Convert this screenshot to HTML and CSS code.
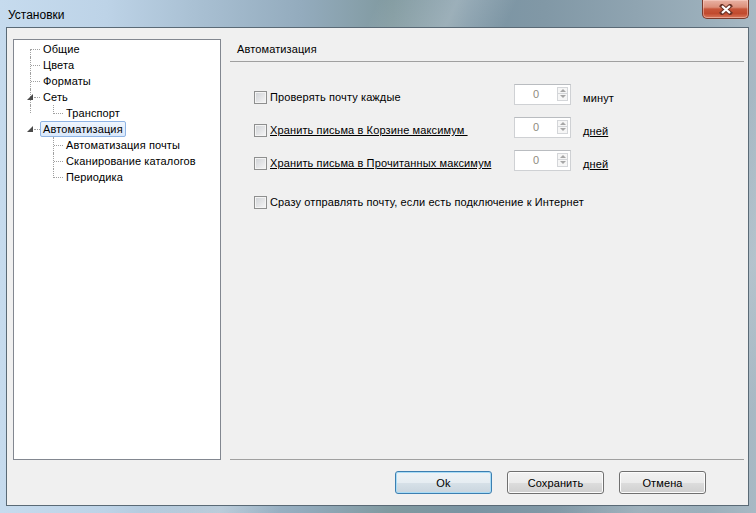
FILE: index.html
```html
<!DOCTYPE html>
<html lang="ru">
<head>
    <meta charset="UTF-8">
    <title>Установки</title>
    <link rel="stylesheet" href="styles.css">
</head>
<body>
<div class="window">
    <div class="titlebar">
        <div class="title">Установки</div>
        <button class="close" type="button">
            <svg width="14" height="11" viewBox="0 0 14 11">
                <path d="M3 2 L11 9 M11 2 L3 9" stroke="#6b3226" stroke-width="4.2" stroke-linecap="square" fill="none"/>
                <path d="M3 2 L11 9 M11 2 L3 9" stroke="#ffffff" stroke-width="2.2" fill="none"/>
            </svg>
        </button>
    </div>

    <div class="client">
        <div class="main">
            <!-- дерево разделов -->
            <div class="tree">
                <div class="node"><span class="cell first"></span><span class="label">Общие</span></div>
                <div class="node"><span class="cell"></span><span class="label">Цвета</span></div>
                <div class="node"><span class="cell"></span><span class="label">Форматы</span></div>
                <div class="node"><span class="cell open"><i class="glyph"></i></span><span class="label">Сеть</span></div>
                <div class="node"><span class="cell pipe short"></span><span class="cell end"></span><span class="label">Транспорт</span></div>
                <div class="node"><span class="cell open last"><i class="glyph"></i></span><span class="label selected">Автоматизация</span></div>
                <div class="node"><span class="cell blank"></span><span class="cell"></span><span class="label">Автоматизация почты</span></div>
                <div class="node"><span class="cell blank"></span><span class="cell"></span><span class="label">Сканирование каталогов</span></div>
                <div class="node"><span class="cell blank"></span><span class="cell end"></span><span class="label">Периодика</span></div>
            </div>

            <!-- страница настроек -->
            <div class="page">
                <div class="page-head">Автоматизация</div>
                <div class="options">
                    <div class="opt">
                        <label class="check"><span class="box"></span><span class="text">Проверять почту каждые</span></label>
                        <div class="spin"><span class="value">0</span><span class="arrows"><span class="up"></span><span class="down"></span></span></div>
                        <span class="unit">минут</span>
                    </div>
                    <div class="opt">
                        <label class="check"><span class="box"></span><span class="text link">Хранить письма в Корзине максимум&nbsp;</span></label>
                        <div class="spin"><span class="value">0</span><span class="arrows"><span class="up"></span><span class="down"></span></span></div>
                        <span class="unit link">дней</span>
                    </div>
                    <div class="opt">
                        <label class="check"><span class="box"></span><span class="text link">Хранить письма в Прочитанных максимум</span></label>
                        <div class="spin"><span class="value">0</span><span class="arrows"><span class="up"></span><span class="down"></span></span></div>
                        <span class="unit link">дней</span>
                    </div>
                    <div class="opt wide">
                        <label class="check"><span class="box"></span><span class="text">Сразу отправлять почту, если есть подключение к Интернет</span></label>
                    </div>
                </div>
            </div>
        </div>

        <div class="buttons">
            <button class="btn default" type="button">Ok</button>
            <button class="btn" type="button">Сохранить</button>
            <button class="btn small" type="button">Отмена</button>
        </div>
    </div>
</div>
</body>
</html>
```

FILE: styles.css
```css
body {
    margin: 0;
    font-family: "Liberation Sans", Arial, sans-serif;
    font-size: 11px;
    letter-spacing: 0.12px;
    color: #000;
}

/* окно с рамкой "стекло" */
.window {
    width: 756px;
    height: 513px;
    box-sizing: border-box;
    padding: 0 7px 7px 6px;
    background:
        linear-gradient(115deg, rgba(255,255,255,0) 38%, rgba(255,255,255,.25) 46%, rgba(255,255,255,0) 52%, rgba(255,255,255,0) 80%, rgba(255,255,255,.15) 88%, rgba(255,255,255,0) 95%),
        linear-gradient(to right, #c6dbee 0%, #bdd3e7 14%, #a9c0d3 26%, #93abbd 40%, #80999f 52%, #7a94a3 62%, #8198a6 72%, #8fa4b1 84%, #9cb0bc 94%, #a8b9c4 100%);
}

.titlebar {
    height: 27px;
    display: flex;
    justify-content: space-between;
    align-items: flex-start;
}

.title {
    padding: 8px 0 0 2px;
    font-size: 12px;
    line-height: 15px;
    letter-spacing: 0;
    color: #000;
}

.close {
    width: 47px;
    height: 19px;
    padding: 0;
    margin: 0;
    display: flex;
    align-items: center;
    justify-content: center;
    border: 1px solid #7a3a2c;
    border-top: none;
    border-radius: 0 0 5px 5px;
    background: linear-gradient(#e9b2a4 0%, #dc8f7a 40%, #c7553a 50%, #c14a2e 75%, #d9785c 100%);
    box-shadow: inset 0 0 0 1px rgba(255,220,210,.45);
}

.client {
    border: 1px solid #5a6a76;
    background-color: #f0f0f0;
    padding: 11px 0 11px 6px;
}

.main {
    display: flex;
    align-items: flex-start;
    gap: 9px;
    padding-right: 4px;
}

/* дерево */
.tree {
    width: 208px;
    height: 421px;
    box-sizing: border-box;
    flex: none;
    border: 1px solid #828790;
    background-color: #fff;
    padding: 1px 0 0 3px;
}

.node {
    display: flex;
    height: 16px;
}

.cell {
    position: relative;
    width: 23px;
    height: 16px;
    flex: none;
}

.cell::before {
    content: '';
    position: absolute;
    left: 13px;
    top: 0;
    bottom: 0;
    border-left: 1px dotted #a0a0a0;
}

.cell::after {
    content: '';
    position: absolute;
    left: 14px;
    right: 0;
    top: 8px;
    border-top: 1px dotted #a0a0a0;
}

.cell.first::before { top: 8px; }
.cell.end::before { bottom: 7px; }
.cell.short::before { bottom: 8px; }
.cell.pipe::after { display: none; }
.cell.blank::before,
.cell.blank::after { display: none; }
.cell.last::before { display: none; }
.cell.open::after { left: 17px; }

.glyph {
    position: absolute;
    left: 10px;
    top: 5px;
    width: 0;
    height: 0;
    border-left: 6px solid transparent;
    border-bottom: 6px solid #4a4a4a;
}

.label {
    height: 16px;
    box-sizing: border-box;
    padding: 0 2px;
    border: 1px solid transparent;
    line-height: 14px;
    white-space: nowrap;
}

.label.selected {
    border-color: #8fb4e4;
    border-radius: 2px;
    background: linear-gradient(#eef5fd, #d9e8fb);
}

/* страница */
.page {
    flex: 1;
    height: 420px;
    border-bottom: 1px solid #a0a0a0;
}

.page-head {
    height: 22px;
    border-bottom: 1px solid #a0a0a0;
    padding-left: 7px;
    line-height: 20px;
}

.options {
    padding: 22px 0 0 24px;
}

.opt {
    display: flex;
    align-items: center;
    height: 21px;
    margin-bottom: 12px;
}

.opt.wide {
    margin-top: 18px;
}

.check {
    width: 260px;
    margin-top: 5px;
    display: flex;
    align-items: center;
    gap: 3px;
    white-space: nowrap;
}

.box {
    width: 13px;
    height: 13px;
    box-sizing: border-box;
    flex: none;
    border: 1px solid #8e8f8f;
    background: linear-gradient(135deg, #cfd2d6 0%, #e4e5e7 55%, #f7f7f7 100%);
    box-shadow: inset 0 0 0 1px #f4f4f4;
}

.link {
    text-decoration: underline;
}

.spin {
    width: 57px;
    height: 21px;
    box-sizing: border-box;
    display: flex;
    align-items: center;
    border: 1px solid #cfd1d4;
    border-top-color: #b9bcc0;
    background-color: #fff;
}

.value {
    flex: 1;
    text-align: center;
    color: #8f8a80;
    padding-bottom: 2px;
}

.arrows {
    width: 11px;
    height: 14px;
    margin-right: 2px;
    margin-bottom: 2px;
    display: flex;
    flex-direction: column;
    border: 1px solid #d4d6d9;
    box-sizing: border-box;
}

.up,
.down {
    flex: 1;
    display: flex;
    align-items: center;
    justify-content: center;
    background-color: #f6f6f6;
}

.up { border-bottom: 1px solid #d4d6d9; }

.up::before {
    content: '';
    border-left: 3px solid transparent;
    border-right: 3px solid transparent;
    border-bottom: 3px solid #a6a6a6;
}

.down::before {
    content: '';
    border-left: 3px solid transparent;
    border-right: 3px solid transparent;
    border-top: 3px solid #a6a6a6;
}

.unit {
    margin-left: 12px;
    padding-top: 6px;
}

/* кнопки */
.buttons {
    display: flex;
    justify-content: flex-end;
    gap: 15px;
    margin-top: 11px;
    padding-right: 42px;
}

.btn {
    width: 97px;
    height: 23px;
    padding: 0;
    margin: 0;
    font-family: "Liberation Sans", Arial, sans-serif;
    font-size: 11px;
    letter-spacing: 0.12px;
    color: #000;
    border: 1px solid #707070;
    border-radius: 3px;
    background: linear-gradient(#f2f2f2 0%, #ebebeb 50%, #dddddd 51%, #cfcfcf 100%);
    box-shadow: inset 0 0 0 1px #fcfcfc;
}

.btn.small {
    width: 87px;
}

.btn.default {
    border-color: #3c7fb1;
    box-shadow: inset 0 0 0 1px #a9dcf6;
    background: linear-gradient(#eef3f6 0%, #e6edf2 50%, #d7e1e8 51%, #c9d5de 100%);
}
```
